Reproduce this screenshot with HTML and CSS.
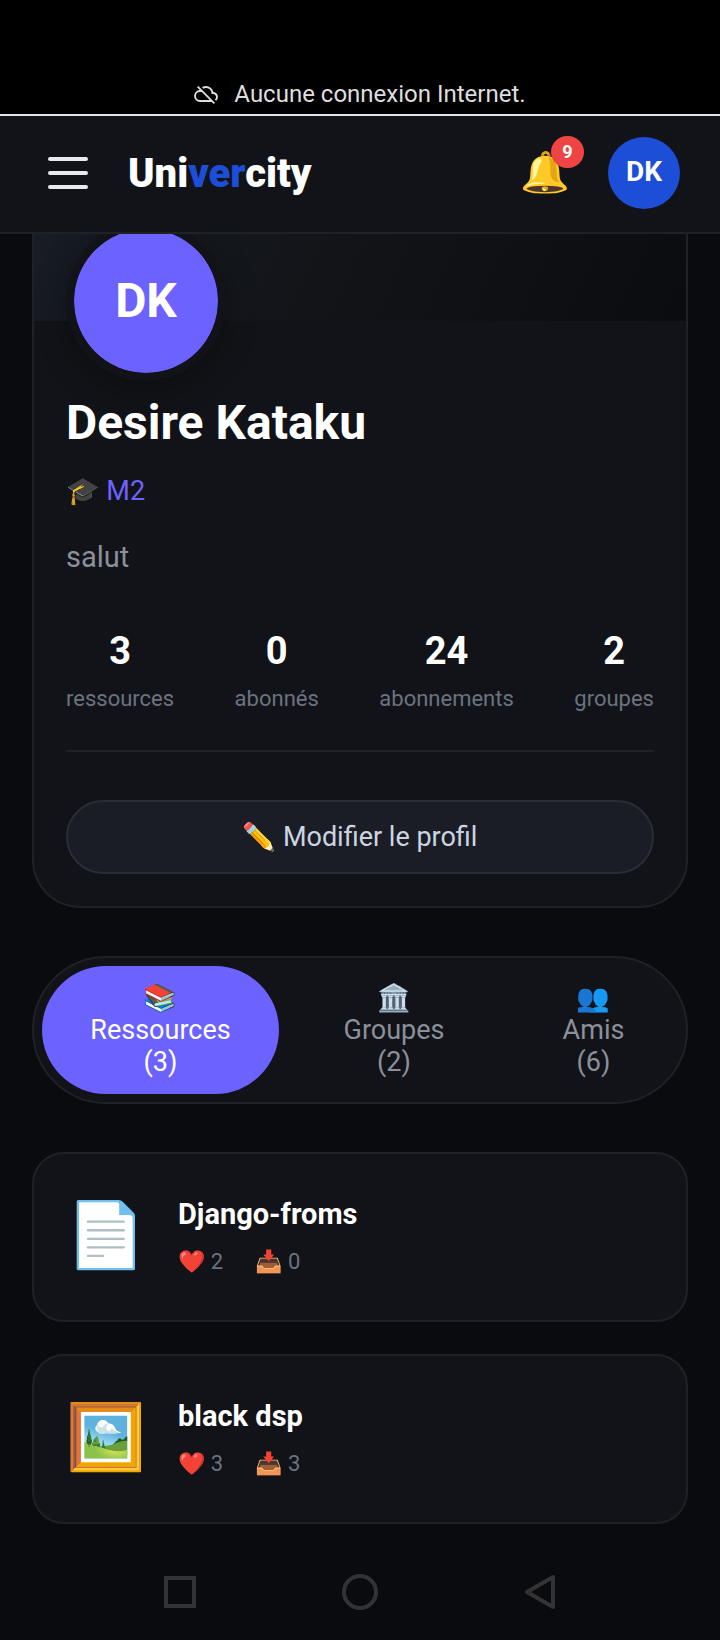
FILE: index.html
```html
<!DOCTYPE html>
<html lang="fr">
<head>
    <meta charset="UTF-8">
    <meta name="viewport" content="width=device-width, initial-scale=1.0">
    <title>Univercity | Profil</title>
    <link rel="stylesheet" href="styles.css">
</head>
<body>
    <div class="status-bar">
        <svg class="offline-icon" viewBox="0 0 24 24" aria-hidden="true">
            <path d="M19.35 10.04A7.49 7.49 0 0 0 12 4c-1.48 0-2.85.43-4.01 1.17l1.46 1.46A5.5 5.5 0 0 1 17.5 11.5v.5H19a3 3 0 0 1 1.79 5.4l1.4 1.4A4.98 4.98 0 0 0 24 15c0-2.64-2.05-4.78-4.65-4.96zM3 5.27l2.75 2.74A6 6 0 0 0 6 20h11.73l2 2L21 20.73 4.27 4 3 5.27zM7.73 10l8 8H6a4 4 0 0 1 0-8h1.73z"/>
        </svg>
        <span>Aucune connexion Internet.</span>
    </div>

    <header class="navbar">
        <button class="menu-btn" aria-label="Menu">
            <span></span>
            <span></span>
            <span></span>
        </button>
        <a href="#" class="logo">Uni<span>ver</span>city</a>
        <button class="notif-btn" aria-label="Notifications">
            🔔
            <span class="badge">9</span>
        </button>
        <a href="#" class="user-avatar">DK</a>
    </header>

    <main>
        <section class="profile-card">
            <div class="cover"></div>
            <div class="profile-body">
                <div class="profile-avatar">DK</div>
                <h1>Desire Kataku</h1>
                <p class="level">🎓 M2</p>
                <p class="bio">salut</p>
                <div class="stats">
                    <div class="stat"><strong>3</strong><span>ressources</span></div>
                    <div class="stat"><strong>0</strong><span>abonnés</span></div>
                    <div class="stat"><strong>24</strong><span>abonnements</span></div>
                    <div class="stat"><strong>2</strong><span>groupes</span></div>
                </div>
                <button class="edit-btn">✏️ Modifier le profil</button>
            </div>
        </section>

        <nav class="tabs">
            <button class="tab active">📚<br>Ressources<br>(3)</button>
            <button class="tab">🏛️<br>Groupes<br>(2)</button>
            <button class="tab">👥<br>Amis<br>(6)</button>
        </nav>

        <section class="resources">
            <article class="resource">
                <div class="resource-icon">📄</div>
                <div class="resource-info">
                    <h2>Django-froms</h2>
                    <div class="meta"><span>❤️ 2</span><span>📥 0</span></div>
                </div>
            </article>
            <article class="resource">
                <div class="resource-icon">🖼️</div>
                <div class="resource-info">
                    <h2>black dsp</h2>
                    <div class="meta"><span>❤️ 3</span><span>📥 3</span></div>
                </div>
            </article>
        </section>
    </main>

    <footer class="system-nav">
        <button aria-label="Applications récentes">
            <svg viewBox="0 0 36 36"><rect x="4" y="4" width="28" height="28"/></svg>
        </button>
        <button aria-label="Accueil">
            <svg viewBox="0 0 36 36"><circle cx="18" cy="18" r="16"/></svg>
        </button>
        <button aria-label="Retour">
            <svg viewBox="0 0 36 36"><path d="M31 3v30L5 18z" stroke-linejoin="round"/></svg>
        </button>
    </footer>
</body>
</html>
```
FILE: styles.css
```css
:root {
    --bg: #0a0b0f;
    --card: #121318;
    --border: #1f2127;
    --primary: #6c63ff;
    --blue: #1d4ed8;
    --muted: #8b909a;
    --faint: #6b7280;
}

* {
    box-sizing: border-box;
    margin: 0;
    padding: 0;
}

body {
    background-color: var(--bg);
    color: #ffffff;
    font-family: Roboto, "Noto Color Emoji", sans-serif;
    min-height: 100vh;
    display: flex;
    flex-direction: column;
}

button {
    background: none;
    border: none;
    color: inherit;
    font: inherit;
    cursor: pointer;
}

a {
    color: inherit;
    text-decoration: none;
}

/* Status bar */
.status-bar {
    display: flex;
    justify-content: center;
    align-items: center;
    gap: 16px;
    padding: 80px 0 6px;
    background-color: #000000;
    border-bottom: 2px solid #dfe3ec;
    color: #dedede;
    font-size: 24px;
    line-height: 28px;
}

.offline-icon {
    width: 24px;
    height: 24px;
    fill: currentColor;
}

/* Header */
.navbar {
    display: flex;
    align-items: center;
    height: 118px;
    padding: 0 40px 2px 48px;
    background-color: var(--card);
    border-bottom: 2px solid var(--border);
}

.menu-btn {
    display: flex;
    flex-direction: column;
    gap: 10px;
    width: 40px;
}

.menu-btn span {
    height: 4px;
    border-radius: 2px;
    background-color: #e8e9ec;
}

.logo {
    margin-left: 40px;
    font-size: 40px;
    font-weight: 900;
}

.logo span {
    color: var(--blue);
}

.notif-btn {
    position: relative;
    margin-left: auto;
    font-size: 40px;
    line-height: 48px;
}

.badge {
    position: absolute;
    top: -13px;
    right: -14px;
    width: 33px;
    height: 32px;
    border-radius: 16px;
    background-color: #ef4444;
    font-size: 18px;
    font-weight: 700;
    line-height: 32px;
    text-align: center;
}

.user-avatar {
    width: 72px;
    height: 72px;
    margin-left: 38px;
    border-radius: 50%;
    background-color: var(--blue);
    font-size: 28px;
    font-weight: 700;
    line-height: 70px;
    text-align: center;
}

/* Profile */
main {
    flex: 1;
    padding: 0 32px;
    overflow: hidden;
}

.profile-card {
    background-color: var(--card);
    border: 2px solid var(--border);
    border-top: none;
    border-radius: 0 0 48px 48px;
}

.cover {
    height: 87px;
    background: linear-gradient(115deg, #171c25, #121418 45%, #0b0c0f);
}

.profile-body {
    padding: 0 32px 32px;
}

.profile-avatar {
    width: 160px;
    height: 160px;
    margin-top: -100px;
    border: 8px solid var(--card);
    border-radius: 50%;
    background-color: var(--primary);
    background-clip: padding-box;
    box-shadow: 0 8px 32px rgba(0, 0, 0, 0.3);
    font-size: 48px;
    font-weight: 700;
    line-height: 144px;
    text-align: center;
}

h1 {
    margin-top: 14px;
    font-size: 48px;
    line-height: 56px;
}

.level {
    margin-top: 24px;
    color: var(--primary);
    font-size: 27px;
    line-height: 32px;
}

.bio {
    margin-top: 32px;
    color: var(--muted);
    font-size: 29px;
    line-height: 36px;
}

.stats {
    display: flex;
    justify-content: space-between;
    margin: 52px 0 48px;
    padding-bottom: 37px;
    border-bottom: 2px solid var(--border);
    text-align: center;
}

.stat strong {
    display: block;
    font-size: 38px;
    line-height: 48px;
}

.stat span {
    display: block;
    margin-top: 10px;
    color: var(--faint);
    font-size: 22px;
    line-height: 28px;
}

.edit-btn {
    display: block;
    width: 100%;
    height: 74px;
    border: 2px solid #2b2d36;
    border-radius: 37px;
    background-color: #1a1d26;
    color: #cbd5e1;
    font-size: 27px;
}

/* Tabs */
.tabs {
    display: grid;
    grid-template-columns: 237fr 214fr 169fr;
    gap: 8px;
    margin-top: 48px;
    padding: 8px;
    background-color: var(--card);
    border: 2px solid var(--border);
    border-radius: 74px;
}

.tab {
    padding: 16px 0;
    border-radius: 64px;
    color: var(--muted);
    font-size: 27px;
    line-height: 32px;
}

.tab.active {
    background-color: var(--primary);
    color: #ffffff;
}

/* Resources */
.resources {
    display: flex;
    flex-direction: column;
    gap: 32px;
    margin-top: 48px;
}

.resource {
    display: flex;
    align-items: center;
    gap: 32px;
    height: 170px;
    padding: 0 32px 2px;
    background-color: var(--card);
    border: 2px solid var(--border);
    border-radius: 32px;
}

.resource-icon {
    width: 80px;
    font-size: 64px;
    line-height: 76px;
    text-align: center;
}

h2 {
    font-size: 29px;
    line-height: 36px;
}

.meta {
    display: flex;
    gap: 32px;
    margin-top: 16px;
    color: var(--faint);
    font-size: 22px;
    line-height: 28px;
}

/* System navigation */
.system-nav {
    display: flex;
    justify-content: space-around;
    padding: 30px 90px;
}

.system-nav button {
    width: 36px;
    height: 36px;
}

.system-nav svg {
    display: block;
    fill: none;
    stroke: #333335;
    stroke-width: 4;
}
```
